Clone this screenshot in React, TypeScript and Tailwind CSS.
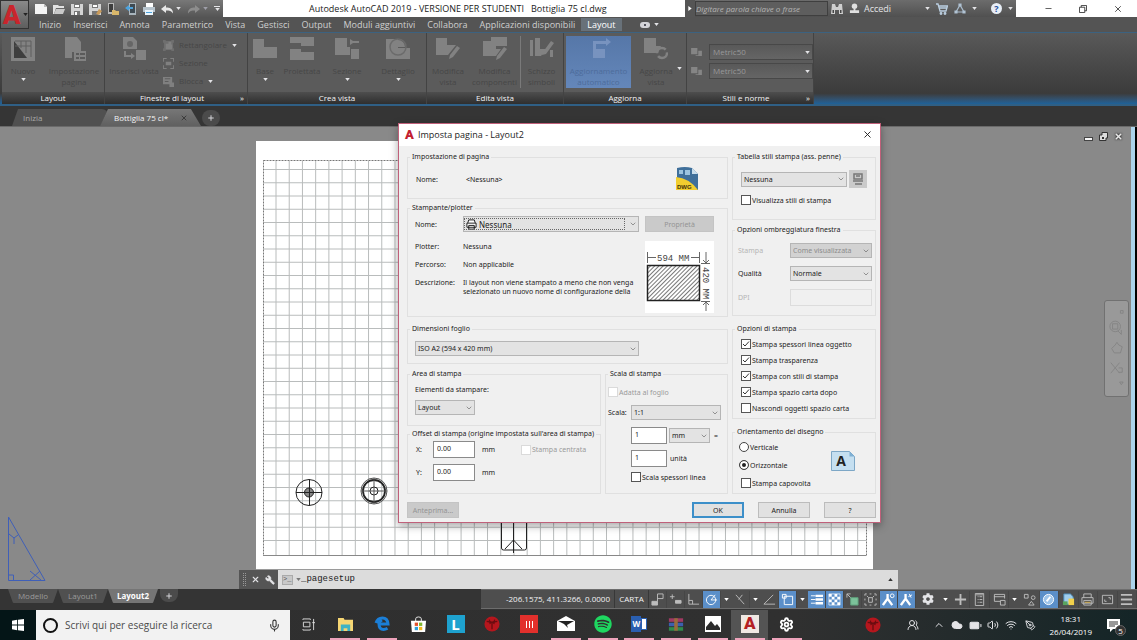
import type { ReactNode } from 'react';
import { clsx } from 'clsx';
import { FaCog, FaSpotify } from 'react-icons/fa';
import { Battery, ChevronDown, ChevronUp, Cloud, Mic, Minus, PenTool, Plus, Settings, UsersRound, Volume2, Wifi, Wrench, X } from 'lucide-react';

const MENU_TABS = ['Inizio', 'Inserisci', 'Annota', 'Parametrico', 'Vista', 'Gestisci', 'Output', 'Moduli aggiuntivi', 'Collabora', 'Applicazioni disponibili', 'Layout'];

const PRINT_OPTIONS = [
  { label: 'Stampa spessori linea oggetto', checked: true },
  { label: 'Stampa trasparenza', checked: true },
  { label: 'Stampa con stili di stampa', checked: true },
  { label: 'Stampa spazio carta dopo', checked: true },
  { label: 'Nascondi oggetti spazio carta', checked: false },
];

function Caret({ className = 'text-zinc-200' }: { className?: string }) {
  return (
    <svg viewBox="0 0 6 4" className={clsx('h-[3px] w-[5px] shrink-0', className)} fill="currentColor">
      <path d="M0 0h6L3 4z" />
    </svg>
  );
}

/* ---------- Title bar ---------- */

function QuickButton({ label, children }: { label: string; children: ReactNode }) {
  return (
    <button type="button" aria-label={label} className="flex h-[17px] w-[18px] items-center justify-center">
      <svg viewBox="0 0 14 12" className="h-3 w-[14px]">{children}</svg>
    </button>
  );
}

function QuickAccess() {
  return (
    <div className="flex items-center">
      <QuickButton label="Nuovo"><path d="M1 1h9l3 3v7H1z" fill="#f4f4f4" /><path d="M10 1v3h3z" fill="#bbb" /></QuickButton>
      <QuickButton label="Apri"><path d="M1 2h5l1 1h5v2H4l-2 6H1z" fill="#e2e2e2" /><path d="M4 6h9l-2 5H2z" fill="#c9c9c9" /></QuickButton>
      <QuickButton label="Salva"><path d="M1 1h12v11H1z" fill="#d4d4d4" /><path d="M4 1h6v4H4zM4 8h6v4H4z" fill="#777" /><path d="M5 2h4v2H5zM5 9h2v3H5z" fill="#fff" /></QuickButton>
      <QuickButton label="Salva con nome"><path d="M1 1h12v11H1z" fill="#d4d4d4" /><path d="M4 1h6v4H4zM4 8h6v4H4z" fill="#777" /><path d="M5 2h4v2H5z" fill="#fff" /><path d="M8 11l3-5 3 2-3 4z" fill="#c89a5a" /></QuickButton>
      <QuickButton label="Apri da Web"><path d="M2 0h6v11H2z" fill="#b8b8b8" /><path d="M3 1h4v8H3z" fill="#3d3d3d" /><path d="M6 7h3l1 1h3v4H6z" fill="#d9b76a" /></QuickButton>
      <QuickButton label="Salva in Web"><path d="M5 0h7v12H5z" fill="#a8b4bc" /><path d="M6 1h5v9H6z" fill="#3f4a52" /><path d="M1 5l4-3v2h4v2H5v2z" fill="#4da3dd" /></QuickButton>
      <QuickButton label="Stampa"><path d="M4 0h7v4H4z" fill="#fff" /><path d="M1 4h12v5H1z" fill="#b7c4cd" /><path d="M3 7h8v5H3z" fill="#e9f4fb" /><path d="M4 9h6v1H4z" fill="#4da3dd" /></QuickButton>
      <QuickButton label="Annulla"><path d="M1 6l5-4v2.500c4 0 7 1 7 6-1.500-2.500-3.500-3-7-3V10z" fill="#e8e8e8" /></QuickButton>
      <Caret />
      <span className="ml-1 flex"><QuickButton label="Ripeti"><path d="M13 6L8 2v2.500c-4 0-7 1-7 6 1.500-2.500 3.500-3 7-3V10z" fill="#8d8d8d" /></QuickButton></span>
      <Caret className="text-zinc-400" />
      <button type="button" aria-label="Personalizza" className="ml-[6px] flex flex-col items-center gap-px">
        <span className="h-px w-[6px] bg-zinc-200" />
        <Caret />
      </button>
    </div>
  );
}

function TitleBar() {
  return (
    <header className="flex h-[17px] shrink-0 bg-white">
      <div className="flex w-[223px] shrink-0 bg-linear-to-b from-[#787878] to-[#555] pl-8">
        <QuickAccess />
      </div>
      <h1 className="flex-1 overflow-hidden pl-[86px] font-['Open_Sans',sans-serif] text-[9px] leading-[17px] whitespace-pre text-[#222]">
        Autodesk AutoCAD 2019 - VERSIONE PER STUDENTI{'   '}Bottiglia 75 cl.dwg
      </h1>
      <div className="flex w-[331px] shrink-0 items-center bg-linear-to-b from-[#6c6c6c] to-[#505050]">
        <div className="flex h-full w-[10px] items-center justify-center bg-[#555]">
          <svg viewBox="0 0 4 6" className="h-[5px] w-1" fill="#fff"><path d="M0 0l4 3-4 3z" /></svg>
        </div>
        <input aria-label="Cerca" placeholder="Digitare parola chiave o frase" className="h-[15px] w-[133px] border border-[#3f3f3f] bg-[#5e5e5e] text-[8px] italic placeholder:text-[#b5b5b5]" />
        <button type="button" aria-label="Trova" className="ml-[3px] w-3">
          <svg viewBox="0 0 12 12" className="h-3 w-3" fill="#cfcfcf"><path d="M1 1h3l1 3h2l1-3h3l1 10H8V7H4v4H0z" /><path d="M1.500 7h1.500v3H1.500zM9 7h1.500v3H9z" fill="#444" /></svg>
        </button>
        <button type="button" className="ml-[6px] flex items-center gap-1 text-[9px] leading-[17px] text-zinc-200">
          <svg viewBox="0 0 12 12" className="h-[11px] w-[11px]" fill="#e0e0e0"><circle cx="6" cy="3.500" r="3" /><path d="M5 6h2v2h4v3H1V8h4z" /></svg>
          Accedi
        </button>
        <span className="ml-auto flex items-center gap-[6px] pr-[3px]">
          <Caret />
          <svg viewBox="0 0 12 12" className="h-3 w-3" fill="none" stroke="#bcd0e2" strokeWidth="1.300"><path d="M0 1h2l2 7h6l1.500-5H3M3.500 5h7" /><circle cx="5" cy="10.500" r=".8" /><circle cx="9" cy="10.500" r=".8" /></svg>
          <svg viewBox="0 0 12 12" className="h-3 w-3" fill="none" stroke="#a9bccd" strokeWidth="1.200"><path d="M6 2L2 9h8z" /><path d="M5 1h2v2H5zM1 8h2v2H1zM9 8h2v2H9z" fill="#d5e0ea" /></svg>
          <Caret />
          <span className="ml-2 flex h-[11px] w-[11px] items-center justify-center rounded-full bg-[#e8eef6] text-[9px] font-bold text-[#1f4f9c]">?</span>
          <Caret />
        </span>
      </div>
      <div className="flex w-[121px] shrink-0 items-center justify-between pr-[14px] pl-[28px] text-[#333]">
        <button type="button" aria-label="Riduci a icona"><Minus size={9} strokeWidth={2} /></button>
        <button type="button" aria-label="Ripristina">
          <svg viewBox="0 0 9 9" className="h-2 w-2" fill="none" stroke="currentColor"><path d="M.5 2.500h6v6h-6zM2.500 2.500v-2h6v6h-2" /></svg>
        </button>
        <button type="button" aria-label="Chiudi"><X size={10} strokeWidth={2} /></button>
      </div>
    </header>
  );
}

function MenuTabs() {
  return (
    <nav className="flex h-[15px] shrink-0 items-center bg-[#545454] pl-[33px] text-[9px] text-[#cfcfcf]">
      {MENU_TABS.map((tab) => (
        <button
          key={tab}
          type="button"
          className={clsx('h-[13px] px-[6px] leading-[13px] whitespace-nowrap', tab === 'Layout' && 'bg-[#687179] text-white')}
        >
          {tab}
        </button>
      ))}
      <span className="ml-[18px] flex h-[6px] w-[10px] items-center justify-center rounded-sm bg-zinc-300"><span className="h-[2px] w-[2px] bg-zinc-600" /></span>
      <span className="ml-1"><Caret /></span>
    </nav>
  );
}

/* ---------- Ribbon ---------- */

function Panel({ title, width, more, children }: { title: string; width: string; more?: boolean; children: ReactNode }) {
  return (
    <section className={clsx('flex shrink-0 flex-col border-r border-[#434343] bg-[#5b5b5b]', width)}>
      <div className="flex flex-1 pt-[3px]">{children}</div>
      <h2 className={clsx('relative h-3 bg-linear-to-b from-[#4e4e4e] to-[#2f2f2f] text-center text-[8px] leading-[11px] text-zinc-100', more && 'pr-2')}>
        {title}
        {more && <span className="absolute right-[3px]">»</span>}
      </h2>
    </section>
  );
}

function RibbonButton({ lines, width, caret, active, children }: { lines: string[]; width: string; caret?: boolean; active?: boolean; children: ReactNode }) {
  return (
    <button
      type="button"
      className={clsx('flex h-[52px] shrink-0 flex-col items-center text-[8px] leading-[11px]', width, active ? 'bg-linear-to-b from-[#5677a8] to-[#6487ba] text-[#4d6c9b]' : 'text-[#474747]')}
    >
      <svg viewBox="0 0 24 24" className={clsx('mt-px mb-[4px] h-6 w-6 shrink-0', active ? 'text-[#7893bf]' : 'text-[#828282]')} fill="currentColor">{children}</svg>
      {lines.map((line) => <span key={line} className="whitespace-nowrap">{line}</span>)}
      {caret && <span className="mt-[2px]"><Caret /></span>}
    </button>
  );
}

function SmallTool({ label, caret, children }: { label: string; caret?: boolean; children: ReactNode }) {
  return (
    <button type="button" className="flex h-[18px] items-center gap-[5px] text-[8px] text-[#474747]">
      <svg viewBox="0 0 12 12" className="h-[11px] w-[11px] text-[#808080]" fill="currentColor">{children}</svg>
      {label}
      {caret && <Caret />}
    </button>
  );
}

function StyleSelect({ label }: { label: string }) {
  return (
    <label className="flex items-center gap-[7px]">
      <svg viewBox="0 0 12 10" className="h-[9px] w-[11px]" fill="#858585"><path d="M0 0h7v7H0zM8 3h4v6H5V8h3z" /></svg>
      <span className="relative flex flex-1 items-center">
        <select aria-label={label} className="h-4 w-full appearance-none border border-[#484848] bg-linear-to-b from-[#595959] to-[#656565] pl-[3px] text-[8px] text-[#999]">
          <option>Metric50</option>
        </select>
        <span className="pointer-events-none absolute right-[3px]"><Caret /></span>
      </span>
    </label>
  );
}

function Ribbon() {
  return (
    <div className="flex h-[74px] shrink-0 border-t border-b-2 border-t-[#3c6280] border-b-[#2f5f85] bg-linear-to-b from-[#595959] via-[#3b3b3b] via-85% to-[#1d6299] pl-[2px]">
      <Panel title="Layout" width="w-[103px]">
        <RibbonButton lines={['Nuovo']} width="w-[42px]" caret>
          <path d="M0 0h24v24H0z" /><path d="M3 4v17h13z" fill="#3e3e3e" /><path d="M4 4h16v16M10 4v7M15 4v12M4 9h16" fill="none" stroke="#5e5e5e" />
        </RibbonButton>
        <RibbonButton lines={['Impostazione', 'pagina']} width="w-[60px]">
          <path d="M3 0h12l4 5v10h-9v6H3z" /><path d="M12 14h12v10H12z" /><path d="M14 17h3M18 17h5M14 21h3M18 21h5" stroke="#4d4d4d" strokeWidth="1.500" />
        </RibbonButton>
      </Panel>
      <Panel title="Finestre di layout" width="w-[143px]" more>
        <RibbonButton lines={['Inserisci vista']} width="w-[58px]">
          <path d="M1 0h10l4 4v8H1z" /><path d="M14 13h10v10H14zM4 14v4h5v-2l4 3-4 3v-2H2v-6z" /><circle cx="8" cy="7" r="3" fill="#666" />
        </RibbonButton>
        <div className="flex flex-col items-start">
          <SmallTool label="Rettangolare" caret><path d="M0 0h3v1h6V0h3v3h-1v6h1v3H9v-1H3v1H0V9h1V3H0z" fill="#6e6e6e" /><path d="M3 4h3V2h3v3h1v5H3z" /></SmallTool>
          <SmallTool label="Sezione"><path d="M0 0h4v1H1v3H0zM8 0h4v4h-1V1H8zM0 8h1v3h3v1H0zM11 8h1v4H8v-1h3zM3 4h6v4H3z" /></SmallTool>
          <SmallTool label="Blocca" caret><path d="M0 1h10v8H0zM7 7h5v5H7z" /><path d="M2 3h6M2 6h4" stroke="#5a5a5a" /></SmallTool>
        </div>
      </Panel>
      <Panel title="Crea vista" width="w-[179px]">
        <RibbonButton lines={['Base']} width="w-[34px]" caret><path d="M0 2h11v8h13v11H0z" /></RibbonButton>
        <RibbonButton lines={['Proiettata']} width="w-[40px]"><path d="M0 0h24v9H11V6H0zM0 12h11v3h13v8H0z" /></RibbonButton>
        <RibbonButton lines={['Sezione']} width="w-[50px]" caret><path d="M0 1h12v9h3v8H0zM16 12h8v10h-8zM15 2l3 2h6v2h-6l-3 2z" /></RibbonButton>
        <RibbonButton lines={['Dettaglio']} width="w-[52px]" caret><path d="M0 2h12v9h12v11H0z" /><circle cx="12" cy="10" r="8" fill="none" stroke="#6b6b6b" strokeWidth="1.500" /><path d="M12 3a7 7 0 017 7h-7z" /></RibbonButton>
      </Panel>
      <Panel title="Edita vista" width="w-[137px]">
        <RibbonButton lines={['Modifica', 'vista']} width="w-[42px]"><path d="M0 1h11v7h9l-8 10H0z" /><path d="M14 18l7-9 3 2-7 9-4 2z" /></RibbonButton>
        <RibbonButton lines={['Modifica', 'componenti']} width="w-[51px]"><path d="M8 0h16v9H13v3h5l-5 7H0V4h8z" /><path d="M14 19l7-9 3 2-7 9-4 2z" /></RibbonButton>
        <span className="h-[52px] w-px bg-[#7a7a7a]" />
        <RibbonButton lines={['Schizzo', 'simboli']} width="w-[41px]"><path d="M0 3h3v16H0zM5 1h5v11h6l-5 7H5zM13 15l8-11 3 2-8 11-4 1zM20 13h3v7h-3z" /></RibbonButton>
      </Panel>
      <Panel title="Aggiorna" width="w-[123px]">
        <span className="w-[2px] shrink-0" />
        <RibbonButton lines={['Aggiornamento', 'automatico']} width="w-[65px]" active><path d="M6 4h13V1l5 4-5 4V7H9v5h9v9H6z" /></RibbonButton>
        <RibbonButton lines={['Aggiorna', 'vista']} width="w-[50px]"><path d="M0 1h12v8h5l-3 7H0z" /><circle cx="18" cy="16" r="5" fill="none" stroke="currentColor" strokeWidth="2.500" strokeDasharray="12 3" /></RibbonButton>
        <span className="-ml-1 self-center pt-2"><Caret /></span>
      </Panel>
      <Panel title="Stili e norme" width="w-[127px]" more>
        <div className="flex flex-1 flex-col gap-[3px] pt-2 pl-1">
          <StyleSelect label="Stile sezione" />
          <StyleSelect label="Stile dettaglio" />
        </div>
      </Panel>
    </div>
  );
}

function FileTabs() {
  return (
    <div className="flex h-5 shrink-0 items-end bg-[#353535] pl-3 text-[8px] leading-4">
      <button type="button" className="h-[17px] w-[96px] rounded-t-md bg-[#505050] pl-[11px] text-left text-[#a8a8a8] [clip-path:polygon(6px_0,100%_0,92%_100%,0_100%)]">Inizia</button>
      <div className="-ml-2 flex h-[17px] w-[101px] items-center rounded-t-md bg-linear-to-b from-[#777] to-[#606060] pl-[14px] text-zinc-100 [clip-path:polygon(8px_0,90%_0,100%_100%,0_100%)]">
        <button type="button" className="whitespace-nowrap">Bottiglia 75 cl*</button>
        <button type="button" aria-label="Chiudi scheda" className="ml-3 text-[#3c3c3c]"><X size={8} strokeWidth={3} /></button>
      </div>
      <button type="button" aria-label="Nuovo disegno" className="ml-px flex h-4 w-[18px] items-center justify-center rounded-lg bg-[#4b4b4b] text-zinc-300"><Plus size={8} strokeWidth={3} /></button>
    </div>
  );
}

/* ---------- Drawing area ---------- */

const gridX = Array.from({ length: 45 }, (_, i) => 276 + i * 13.22);
const gridY = Array.from({ length: 29 }, (_, i) => 42.5 + i * 13.25);

function Drawing() {
  return (
    <svg width="1131" height="463" viewBox="0 0 1131 463" className="absolute top-0 left-0" fill="none">
      <path d="M256 14h617v430H256z" fill="#fff" />
      <path d="M256 442.500h617" stroke="#9a9a9a" />
      <g stroke="#b9bcbc">
        {gridX.map((x) => <path key={x} d={`M${x} 34V428`} />)}
        {gridY.map((y) => <path key={y} d={`M263 ${y}H866`} />)}
      </g>
      <path d="M263.500 33.500h603v395h-603z" stroke="#777" strokeDasharray="2 1" />
      <path d="M263 428.500h603" stroke="#888" />
      <g stroke="#222">
        <circle cx="309" cy="365.500" r="13" />
        <circle cx="309" cy="365.500" r="4.500" fill="#888" />
        <path d="M296 365.500h26M309.500 352.500v26" />
        <circle cx="374" cy="364" r="13" strokeWidth="1" stroke="#555" />
        <circle cx="374" cy="364" r="11" strokeWidth="1.800" />
        <circle cx="374" cy="364" r="4" />
        <path d="M361 364h26M374 351v26" stroke="#555" />
        <path d="M501.500 389v32q0 2 2 2h21q2 0 2-2v-32" />
        <path d="M513.500 389v37M505 422l8.500-9 8.500 9" />
      </g>
      {/* UCS triangle */}
      <g stroke="#3f5fb8">
        <path d="M8.500 390v63.500H45zM8.500 448h5v5M9 407l5 4 4-3M14 411v6M30 444l11 9M30 453l10-9" />
      </g>
    </svg>
  );
}

function Canvas() {
  return (
    <main className="relative flex-1 overflow-hidden border-t border-[#6a6a6a] bg-[#898989]">
      <Drawing />
      <div className="absolute top-[5px] right-[14px] flex items-center gap-[6px] text-[#e8e8e8]">
        <button type="button" aria-label="Riduci disegno" className="mt-1 h-1 w-[9px] border border-[#444] bg-zinc-100" />
        <button type="button" aria-label="Ripristina disegno">
          <svg viewBox="0 0 9 9" className="h-[9px] w-[9px]"><path d="M3 .5h5.500V6H7v2.500H.5V3H3z" fill="#ddd" stroke="#333" /><path d="M3 5h2v2H3z" fill="#333" /></svg>
        </button>
        <button type="button" aria-label="Chiudi disegno"><X size={9} strokeWidth={4} className="drop-shadow-[0_0_1px_#000]" /></button>
      </div>
      <div className="absolute top-[173px] right-[8px] h-[97px] w-[25px] rounded-[3px] border border-[#717171] bg-[#999] p-1">
        <svg viewBox="0 0 17 88" className="h-full w-full" fill="none" stroke="#838383">
          <path d="M13 1h3v3h-3zM12 82h4l-2 3z" /><circle cx="7" cy="19" r="6" /><path d="M4 16h6v6H4zM10 24l4 4v-5" />
          <path d="M3 44l4-4 2-3 2 3 4 2-2 7H6zM2 60l10 12M12 60L2 72M11 66h4v5h-4" />
        </svg>
      </div>
      <div className="absolute top-0 right-0 bottom-0 w-[6px] border-r-2 border-black bg-[#abd3ec]" />

      {/* Command line */}
      <div className="absolute bottom-0 left-[239px] flex h-[19px] w-[659px] bg-[#dcdcdc]">
        <div className="flex w-[39px] items-center gap-[5px] bg-[#555] pl-1 text-zinc-200">
          <span className="h-[13px] w-[3px] border-x border-dotted border-[#999]" />
          <button type="button" aria-label="Chiudi riga di comando"><X size={9} strokeWidth={3} /></button>
          <button type="button" aria-label="Personalizza riga di comando"><Wrench size={10} fill="currentColor" className="-scale-x-100" /></button>
        </div>
        <span className="flex items-center gap-[3px] pl-1 text-[#888]">
          <span className="flex h-[10px] w-[11px] items-center border border-[#aaa] bg-[#c8c8c8] font-['Liberation_Mono',monospace] text-[7px] text-[#555]">&gt;_</span>
          <Caret className="text-[#777]" />
        </span>
        <input aria-label="Riga di comando" defaultValue="_pagesetup" className="min-w-0 flex-1 font-['Liberation_Mono',monospace] text-[9px] text-[#222]" />
        <button type="button" aria-label="Cronologia comandi" className="w-[10px]"><span className="block w-[5px] rotate-180"><Caret className="block text-[#333]" /></span></button>
      </div>
    </main>
  );
}

/* ---------- Page setup dialog ---------- */

function Group({ title, className, children }: { title: string; className?: string; children: ReactNode }) {
  return (
    <fieldset className={clsx('min-w-0 border border-[#e0e0e0]', className)}>
      <legend className="ml-[2px] h-[10px] px-[2px] leading-[10px] whitespace-nowrap">{title}</legend>
      {children}
    </fieldset>
  );
}

function Select({ label, value, className, disabled }: { label: string; value: string; className?: string; disabled?: boolean }) {
  return (
    <span className={clsx('relative flex h-[15px] items-center', className)}>
      <select
        aria-label={label}
        disabled={disabled}
        className="h-full w-full appearance-none border border-[#b5b5b5] bg-[#e3e3e3] pl-[2px] text-[#1c1c1c] disabled:bg-[#d2d2d2] disabled:text-[#8c8c8c] disabled:opacity-100"
      >
        <option>{value}</option>
      </select>
      <ChevronDown size={8} className="pointer-events-none absolute right-[2px] text-[#666]" />
    </span>
  );
}

function Check({ label, checked, disabled }: { label: string; checked?: boolean; disabled?: boolean }) {
  return (
    <label className={clsx('flex items-center gap-px whitespace-nowrap', disabled && 'text-[#9a9a9a]')}>
      <span className="relative flex h-[10px] w-[10px] shrink-0">
        <input type="checkbox" defaultChecked={checked} disabled={disabled} className="peer h-[10px] w-[10px] appearance-none border border-[#555] bg-white disabled:border-[#dadada]" />
        <svg viewBox="0 0 10 10" className="pointer-events-none absolute hidden h-[10px] w-[10px] peer-checked:block" fill="none" stroke="#333">
          <path d="M2 5l2 2 4-4.500" />
        </svg>
      </span>
      {label}
    </label>
  );
}

function Radio({ label, checked }: { label: string; checked?: boolean }) {
  return (
    <label className="flex h-[18px] items-center gap-px">
      <input type="radio" name="orientamento" defaultChecked={checked} className="h-[10px] w-[10px] shrink-0 appearance-none rounded-full border border-[#444] bg-white checked:bg-[#222] checked:ring-2 checked:ring-white checked:ring-inset" />
      {label}
    </label>
  );
}

function NumberBox({ label, value, className }: { label: string; value: string; className: string }) {
  return <input aria-label={label} defaultValue={value} className={clsx('h-[17px] border border-[#8a8a8a] bg-white px-[3px] pb-[3px]', className)} />;
}

function DialogButton({ label, className, disabled }: { label: string; className?: string; disabled?: boolean }) {
  return (
    <button
      type="button"
      disabled={disabled}
      className={clsx('h-4 w-[52px] border', disabled ? 'border-[#c4c4c4] bg-[#cacaca] text-[#949494]' : 'bg-[#e1e1e1]', className)}
    >
      {label}
    </button>
  );
}

function PaperPreview() {
  return (
    <svg viewBox="0 0 69 72" className="mt-[9px] h-[72px] w-[69px] bg-white" fill="none" stroke="#666">
      <defs>
        <pattern id="hatch" width="3" height="3" patternUnits="userSpaceOnUse" patternTransform="rotate(45)">
          <path d="M.5 0v3" stroke="#555" strokeWidth=".8" />
        </pattern>
      </defs>
      <path d="M2.500 24.500h52v35h-52z" fill="url(#hatch)" stroke="#222" strokeWidth="1.500" />
      <path d="M2.500 11v11M54.500 11v11M3 16.500h8M46 16.500h8M56 22.500h9M56 60.500h9M61 11v11M58 19l3 3 3-3M61 61v9M58 64l3-3 3 3" />
      <text x="12" y="20" fontSize="9" fontFamily="Liberation Mono" fill="#444" stroke="none">594 MM</text>
      <text x="-5" y="0" transform="translate(58 31) rotate(90)" fontSize="9" fontFamily="Liberation Mono" fill="#444" stroke="none">420 MM</text>
    </svg>
  );
}

function PageSetupDialog() {
  return (
    <div role="dialog" aria-label="Imposta pagina" className="absolute top-[123px] left-[398px] w-[483px] border border-[#c0607a] bg-[#f0f0f0] font-['Noto_Sans','Open_Sans',sans-serif] text-[7px] leading-[9px] text-[#1c1c1c] shadow-[0_3px_8px_rgba(0,0,0,0.35)]">
      <div className="flex h-[22px] items-center bg-white pr-[7px] pb-[2px] pl-[6px] font-['Open_Sans',sans-serif] text-[9px]">
        <span className="w-3 font-['Roboto',sans-serif] text-[13px] font-black text-[#c3202f]">A</span>
        <span className="pl-px">Imposta pagina - Layout2</span>
        <button type="button" aria-label="Chiudi" className="ml-auto"><X size={11} strokeWidth={2} /></button>
      </div>

      <div className="flex gap-1 pt-[6px] pr-1 pl-2">
        <div className="w-[321px] shrink-0">
          <Group title="Impostazione di pagina" className="h-[47px]">
            <div className="flex items-center pt-[5px] pl-2">
              <span className="w-[50px]">Nome:</span>
              <span>&lt;Nessuna&gt;</span>
              <svg viewBox="0 0 24 24" className="mr-7 ml-auto h-6 w-6">
                <path d="M2 1q8-2 15 0l6 6v16H2z" fill="#3f6f9a" />
                <path d="M17 1l6 6h-6z" fill="#c8ddec" />
                <path d="M4 3h4v4H4zM10 3h5v5h-5z" fill="#9cc3df" />
                <path d="M1 10q13 1 22 13H1z" fill="#f2ce2f" />
                <text x="2" y="22" fontSize="6" fontWeight="bold" fontFamily="Liberation Sans" fill="#43340c">DWG</text>
              </svg>
            </div>
          </Group>

          <Group title="Stampante/plotter" className="mt-1 h-[114px]">
            <div className="flex gap-[6px] pt-[3px] pl-[7px]">
              <div className="w-[224px]">
                <label className="flex items-center">
                  <span className="w-12">Nome:</span>
                  <span className="relative flex flex-1 items-center">
                    <select aria-label="Nome plotter" className="h-4 w-full appearance-none border border-[#b5b5b5] bg-[#e3e3e3] pl-[15px] text-[8px]">
                      <option>Nessuna</option>
                    </select>
                    <svg viewBox="0 0 12 12" className="pointer-events-none absolute left-[3px] h-[11px] w-[11px]" fill="#fff" stroke="#111"><path d="M3 1h6l1 3 1 1v4H1V5l1-1zM1 4.500h10M3 7h6v4H3z" /></svg>
                    <span className="pointer-events-none absolute inset-y-[2px] right-[14px] left-px border border-dotted border-[#666]" />
                    <ChevronDown size={8} className="pointer-events-none absolute right-[2px] text-[#666]" />
                  </span>
                </label>
                <dl className="grid grid-cols-[48px_1fr] gap-y-[9px] pt-[10px]">
                  <dt>Plotter:</dt>
                  <dd>Nessuna</dd>
                  <dt>Percorso:</dt>
                  <dd>Non applicabile</dd>
                  <dt>Descrizione:</dt>
                  <dd className="whitespace-nowrap">Il layout non viene stampato a meno che non venga<br />selezionato un nuovo nome di configurazione della</dd>
                </dl>
              </div>
              <div className="w-[69px]">
                <DialogButton label="Proprietà" disabled className="w-full" />
                <PaperPreview />
              </div>
            </div>
          </Group>

          <Group title="Dimensioni foglio" className="mt-[7px] h-10">
            <div className="pt-[7px] pl-[7px]"><Select label="Dimensioni foglio" value="ISO A2 (594 x 420 mm)" className="w-[224px]" /></div>
          </Group>

          <div className="mt-[5px] flex gap-1">
            <div className="w-[194px] shrink-0">
              <Group title="Area di stampa" className="h-[57px]">
                <div className="pt-[6px] pl-[7px]">
                  <p>Elementi da stampare:</p>
                  <Select label="Elementi da stampare" value="Layout" className="mt-[6px] w-[60px]" />
                </div>
              </Group>
              <Group title="Offset di stampa (origine impostata sull'area di stampa)" className="mt-[3px] h-[65px]">
                <div className="flex flex-col gap-[6px] pt-[2px] pl-2">
                  <div className="flex items-center">
                    <span className="w-[17px]">X:</span>
                    <NumberBox label="Offset X" value="0.00" className="w-[42px]" />
                    <span className="w-[46px] pl-[7px]">mm</span>
                    <Check label="Stampa centrata" disabled />
                  </div>
                  <div className="flex items-center">
                    <span className="w-[17px]">Y:</span>
                    <NumberBox label="Offset Y" value="0.00" className="w-[42px]" />
                    <span className="pl-[7px]">mm</span>
                  </div>
                </div>
              </Group>
            </div>
            <Group title="Scala di stampa" className="h-[125px] flex-1">
              <div className="flex flex-col pt-2 pl-[2px]">
                <Check label="Adatta al foglio" disabled />
                <div className="mt-2 flex items-center">
                  <span className="w-[23px]">Scala:</span>
                  <Select label="Scala" value="1:1" className="w-[90px]" />
                </div>
                <div className="mt-[7px] flex items-center gap-[2px] pl-[23px]">
                  <NumberBox label="Unità carta" value="1" className="w-9" />
                  <Select label="Unità di misura" value="mm" className="w-[41px]" />
                  <span className="pl-[2px]">=</span>
                </div>
                <div className="mt-[6px] flex items-center gap-[3px] pl-[23px]">
                  <NumberBox label="Unità disegno" value="1" className="w-9" />
                  <span>unità</span>
                </div>
                <div className="mt-[5px] pl-[23px]"><Check label="Scala spessori linea" /></div>
              </div>
            </Group>
          </div>
        </div>

        <div className="min-w-0 flex-1">
          <Group title="Tabella stili stampa (ass. penne)" className="h-[68px]">
            <div className="pt-2 pl-2">
              <div className="flex items-center gap-[2px]">
                <Select label="Tabella stili" value="Nessuna" className="w-[106px]" />
                <button type="button" aria-label="Modifica stile" className="flex h-[18px] w-[18px] items-center justify-center bg-[#cacaca]">
                  <svg viewBox="0 0 12 12" className="h-3 w-3" fill="none" stroke="#777" strokeWidth="1.500"><path d="M2 1h8v5H2zM4 3h4M1 8h10M3 11h7" /></svg>
                </button>
              </div>
              <div className="mt-[7px]"><Check label="Visualizza stili di stampa" /></div>
            </div>
          </Group>

          <Group title="Opzioni ombreggiatura finestra" className="mt-[5px] h-[91px]">
            <div className="flex flex-col gap-2 pt-2 pr-[3px] pl-[5px]">
              <label className="flex items-center justify-between text-[#b5b5b5]">Stampa<Select label="Stampa" value="Come visualizzata" className="w-[82px]" disabled /></label>
              <label className="flex items-center justify-between">Qualità<Select label="Qualità" value="Normale" className="w-[82px]" /></label>
              <label className="flex items-center justify-between text-[#b5b5b5]">DPI<input disabled className="h-[17px] w-[82px] border border-[#dcdcdc]" /></label>
            </div>
          </Group>

          <Group title="Opzioni di stampa" className="mt-2 h-[95px]">
            <div className="flex flex-col gap-[6px] pt-[5px] pl-2">
              {PRINT_OPTIONS.map((opt) => <Check key={opt.label} {...opt} />)}
            </div>
          </Group>

          <Group title="Orientamento del disegno" className="mt-2 h-[67px]">
            <div className="flex items-center justify-between pt-px pr-5 pl-[6px]">
              <div>
                <Radio label="Verticale" />
                <Radio label="Orizzontale" checked />
                <div className="flex h-[18px] items-center pl-[2px]"><Check label="Stampa capovolta" /></div>
              </div>
              <svg viewBox="0 0 24 20" className="mb-2 h-5 w-6">
                <path d="M.5.500h18l5 5v14H.5z" fill="#c5dff0" stroke="#7da7c6" />
                <path d="M18.500.500v5h5z" fill="#7fb0d4" />
                <text x="10" y="15" textAnchor="middle" fontSize="14" fontWeight="bold" fontFamily="Open Sans" fill="#222">A</text>
              </svg>
            </div>
          </Group>
        </div>
      </div>

      <div className="flex gap-[14px] pt-2 pr-1 pb-1 pl-2">
        <DialogButton label="Anteprima..." disabled className="mr-auto" />
        <DialogButton label="OK" className="border-2 border-[#3c8fc9]" />
        <DialogButton label="Annulla" className="border-[#bcbcbc]" />
        <DialogButton label="?" className="border-[#bcbcbc]" />
      </div>
    </div>
  );
}

/* ---------- Status bar ---------- */

function StatusButton({ label, on, wide, children }: { label: string; on?: boolean; wide?: boolean; children: ReactNode }) {
  return (
    <button type="button" aria-label={label} className={clsx('flex h-[17px] items-center justify-center border-r border-[#464646]', wide ? 'min-w-0 flex-1' : 'w-[18px] shrink-0', on ? 'bg-[#5b8fc9] text-white' : 'text-[#bdbdbd]')}>
      <svg viewBox="0 0 14 14" className="h-[13px] w-[13px] shrink-0" fill="none" stroke="currentColor">{children}</svg>
    </button>
  );
}

function StatusCaret() {
  return <button type="button" aria-label="Altre opzioni" className="flex w-[11px] shrink-0 justify-center"><Caret className="text-white" /></button>;
}

function StatusBar() {
  return (
    <div className="flex h-[21px] shrink-0 bg-[#343434] text-[8px]">
      <div className="flex items-start pl-2 leading-[14px] text-[#9b9b9b]">
        <button type="button" className="h-[14px] w-[50px] rounded-b-md bg-[#505050] [clip-path:polygon(0_0,100%_0,90%_100%,10%_100%)]">Modello</button>
        <button type="button" className="h-[14px] w-[50px] rounded-b-md bg-[#505050] [clip-path:polygon(0_0,100%_0,90%_100%,10%_100%)]">Layout1</button>
        <button type="button" className="h-[14px] w-[50px] rounded-b-md bg-[#757575] font-bold text-white [clip-path:polygon(0_0,100%_0,90%_100%,10%_100%)]">Layout2</button>
        <button type="button" aria-label="Nuovo layout" className="ml-[2px] flex h-[13px] w-[18px] items-center justify-center rounded-b-lg bg-[#4b4b4b] text-zinc-300"><Plus size={8} strokeWidth={3} /></button>
      </div>
      <div className="ml-auto flex h-5 w-[656px] shrink-0 items-center border-t border-b border-t-[#6d6d6d] border-b-[#6d6d6d] bg-[#4e4e4e] text-zinc-100">
        <span className="w-[134px] shrink-0 border-r border-[#383838] pr-1 text-right leading-[18px] whitespace-nowrap">-206.1575, 411.3266, 0.0000</span>
        <button type="button" className="w-[34px] shrink-0 border-r border-[#383838] leading-[18px]">CARTA</button>
        <StatusButton label="Vincoli"><path d="M7 9V1h6v5H7" /><path d="M1 9h6v4H1z" fill="currentColor" /></StatusButton>
        <StatusButton label="Input dinamico"><path d="M1 4h5M3.500 1.500v5" /><path d="M7 8h6v3H7z" fill="currentColor" /></StatusButton>
        <StatusButton label="Orto"><path d="M2 1v11h11M2 8h4v4" /></StatusButton>
        <StatusButton label="Puntamento polare" on><circle cx="6.500" cy="7.500" r="5" /><path d="M6.500 7.500H13M6.500 7.500L11 2" /></StatusButton>
        <StatusCaret />
        <StatusButton label="Assonometria"><path d="M2 2l9 10M9 2L5 7" /></StatusButton>
        <StatusCaret />
        <StatusButton label="Puntamento snap"><path d="M13 12H1L11 2" /></StatusButton>
        <StatusButton label="Snap ad oggetto" on><path d="M3.500 3.500h9v9h-9z" /><path d="M1.500 1.500h4v4h-4z" /></StatusButton>
        <StatusCaret />
        <StatusButton label="Spessore linea" on><path d="M1 3h5M1 7h5M1 11h5" /><path d="M6 3h8M6 7h8M6 11h8" strokeWidth="2.500" /></StatusButton>
        <StatusButton label="Trasparenza" on>
          <path d="M1 1h3v3H1zM7 1h3v3H7zM4 4h3v3H4zM10 4h3v3h-3zM1 7h3v3H1zM7 7h3v3H7zM4 10h3v3H4zM10 10h3v3h-3z" fill="currentColor" stroke="none" />
          <path d="M1 1h12v12H1z" strokeWidth=".7" />
        </StatusButton>
        <StatusButton label="Ciclo di selezione"><path d="M1 1l5 5M1 1v4M1 1h4" /><path d="M5 5h8v8H5z" fill="#7cc29a" stroke="#5e9f7b" /></StatusButton>
        <StatusButton label="Filtro di selezione"><path d="M1 1h2M6 1h2M11 1h2v2M13 6v2M13 11v2h-2M8 13H6M3 13H1v-2M1 8V6M1 3V1M5 5h4v5H5zM3 3l2 2M11 3L9 5" /></StatusButton>
        <StatusButton label="Visibilità annotazioni" on><path d="M6 1v5l-5 7M6 6l5 7" strokeWidth="2.500" /><circle cx="11" cy="3" r="2" /></StatusButton>
        <StatusButton label="Scala automatica" on><path d="M6 1v5l-5 7M6 6l5 7" strokeWidth="2.500" /><path d="M9 4l4-2M10 1l2 4" /></StatusButton>
        <button type="button" aria-label="Area di lavoro" className="flex w-6 shrink-0 justify-center text-zinc-200"><FaCog size={12} /></button>
        <StatusCaret />
        <StatusButton wide label="Monitor annotazioni"><path d="M7 1v12M1 7h12" strokeWidth="2" /></StatusButton>
        <StatusButton wide label="Unità"><path d="M2.500.500h9v13h-9zM5 4h1M7 4h3M5 7h1M7 7h3M5 10h1M7 10h3M3 2h8" /></StatusButton>
        <StatusButton wide label="Proprietà rapide"><path d="M8 9H1.500V1.500h11V6M1 4h12M8 8h5v5H8z" /></StatusButton>
        <StatusCaret />
        <StatusButton wide label="Isola oggetti"><path d="M1.500 1.500h4v4h-4zM9 9l3 4H6z" /><circle cx="11" cy="5" r="2" /></StatusButton>
        <StatusButton wide label="Accelerazione hardware" on><circle cx="7" cy="7" r="5.500" fill="#9cc3ea" /><path d="M5 9l4-5" strokeWidth="2" /></StatusButton>
        <StatusButton wide label="Riferimenti"><path d="M2 1h7l3 3v8H2z" fill="#9fcdec" stroke="#4d8fbd" /><path d="M7 6h6v7H7z" fill="#f1d04b" stroke="none" /><path d="M1 9h5v4H1z" fill="#58a45f" stroke="none" /></StatusButton>
        <StatusButton wide label="Stampa"><path d="M3 5V1h8v4M1 5h12v6H1zM3 8h8v5H3z" /><path d="M4 10h6" stroke="#e4bc55" /></StatusButton>
        <StatusButton wide label="Schermo intero"><path d="M1.500 2.500h11v9h-11zM8 5h2v2M4 7v2h2" /></StatusButton>
        <StatusButton wide label="Personalizzazione"><path d="M1 2h12M1 7h12M1 12h12" strokeWidth="2" /></StatusButton>
      </div>
    </div>
  );
}

/* ---------- Windows taskbar ---------- */

function TaskItem({ label, open, active, children }: { label: string; open?: boolean; active?: boolean; children: ReactNode }) {
  return (
    <button type="button" aria-label={label} className={clsx('flex h-[30px] flex-1 flex-col items-center', active && 'bg-[#545454]')}>
      <span className="flex flex-1 items-center">{children}</span>
      <span className={clsx('h-[2px] w-[30px]', open && 'bg-[#eea3bb]')} />
    </button>
  );
}

function RedBall() {
  return (
    <svg viewBox="0 0 18 18" className="h-4 w-4">
      <circle cx="9" cy="9" r="8.500" fill="#b5161d" />
      <path d="M3 6l6 1 6-1M9 7v8M6 4l1 5M12 4l-1 5" fill="none" stroke="#6a0c10" strokeWidth="1.500" />
    </svg>
  );
}

function Taskbar() {
  return (
    <footer className="flex h-[30px] shrink-0 bg-linear-to-r from-[#2f2f2f] via-[#303030] via-70% to-[#142527]">
      <button type="button" aria-label="Start" className="flex w-9 shrink-0 items-center justify-center bg-[#041517]">
        <svg viewBox="0 0 14 14" className="h-3 w-3" fill="#fff"><path d="M0 2l6-1v5.500H0zM7 1l7-1v6.500H7zM0 7.500h6V13l-6-1zM7 7.500h7V14l-7-1z" /></svg>
      </button>
      <label className="flex w-[254px] shrink-0 items-center bg-[#f2f2f2] pr-[9px] pl-[7px]">
        <span className="h-[15px] w-[15px] shrink-0 rounded-full border-2 border-[#111]" />
        <input aria-label="Cerca in Windows" placeholder="Scrivi qui per eseguire la ricerca" className="ml-[7px] min-w-0 flex-1 text-[10px] placeholder:text-[#4a4a4a]" />
        <Mic size={13} className="text-[#333]" />
      </label>
      <div className="flex w-[515px] shrink-0">
        <TaskItem label="Visualizzazione attività">
          <svg viewBox="0 0 14 14" className="h-[13px] w-[13px]" fill="none" stroke="#ddd"><path d="M1.500 4.500h7v5h-7zM1 2V1h8v1M1 12v1h8v-1M12.500 1v12M11 5h3" /></svg>
        </TaskItem>
        <TaskItem label="Esplora file" open>
          <svg viewBox="0 0 18 16" className="h-[15px] w-[17px]"><path d="M1 1h6l1 2h9v12H1z" fill="#f6d673" /><path d="M4 8h10v7h-3v-3H7v3H4z" fill="#3fb3c4" /></svg>
        </TaskItem>
        <TaskItem label="Edge" open>
          <svg viewBox="0 0 16 16" className="h-4 w-4" fill="none"><path d="M2 7q1.500-5 6.500-5T14 8H5M5 8q0 5.500 4.500 5.500 2 0 4-1.200M5 8q-.5-2 3-4" stroke="#1b7fd8" strokeWidth="3" /></svg>
        </TaskItem>
        <TaskItem label="Store">
          <svg viewBox="0 0 18 18" className="h-[17px] w-[17px]"><path d="M6 6V3q0-2 3-2t3 2v3" fill="none" stroke="#eee" /><path d="M1 5h16l-1 12H2z" fill="#fff" /><path d="M5 7h3.500v3.500H5z" fill="#e2532d" /><path d="M9.500 7H13v3.500H9.500z" fill="#7fb62f" /><path d="M5 11.500h3.500V15H5z" fill="#2c9fdb" /><path d="M9.500 11.500H13V15H9.500z" fill="#f2b81e" /></svg>
        </TaskItem>
        <TaskItem label="Lexis"><span className="flex h-[18px] w-[18px] items-center justify-center bg-[#1ea2cf] text-[15px] font-bold text-white">L</span></TaskItem>
        <TaskItem label="Gioco"><RedBall /></TaskItem>
        <TaskItem label="Libreria"><span className="flex h-[18px] w-[18px] items-center justify-center gap-[2px] bg-[#e2302c]"><i className="h-[7px] w-px bg-white" /><i className="h-[7px] w-px bg-white" /><i className="h-[7px] w-px bg-white" /></span></TaskItem>
        <TaskItem label="Posta" open>
          <svg viewBox="0 0 18 16" className="h-4 w-[18px]"><path d="M0 5l9-5 9 5v10H0z" fill="#fff" /><path d="M1 5h16l-7 4 1 3-4-4z" fill="#222" /></svg>
        </TaskItem>
        <TaskItem label="Spotify" open><FaSpotify size={18} color="#1ed760" /></TaskItem>
        <TaskItem label="Word" open>
          <span className="flex items-center"><span className="flex h-4 w-[10px] items-center justify-center bg-[#2a5fb0] text-[8px] font-bold text-white">W</span><span className="h-3 w-[6px] border border-[#2a5fb0] bg-white" /></span>
        </TaskItem>
        <TaskItem label="WinRAR" open>
          <svg viewBox="0 0 18 14" className="h-[13px] w-4"><path d="M1 0h16v4H1z" fill="#a13a63" /><path d="M1 5h16v4H1z" fill="#3c5fae" /><path d="M1 10h16v4H1z" fill="#2f8b4c" /><path d="M7 0h4v14H7z" fill="#9a6b3c" /></svg>
        </TaskItem>
        <TaskItem label="Foto" open>
          <svg viewBox="0 0 16 16" className="h-4 w-4"><path d="M0 0h16v16H0z" fill="#fff" /><path d="M1 14V11l5-6 4 5 2-2 3 4v2z" fill="#2b2b2b" /></svg>
        </TaskItem>
        <TaskItem label="AutoCAD" open active><span className="flex h-[18px] w-[18px] items-center justify-center bg-[#f1e9e4] font-['Roboto',sans-serif] text-[17px] font-black text-[#b51f24]">A</span></TaskItem>
        <TaskItem label="Impostazioni" open><Settings size={15} strokeWidth={3} color="#fff" /></TaskItem>
      </div>
      <div className="ml-auto flex shrink-0 items-center text-zinc-200">
        <RedBall />
        <UsersRound size={12} className="ml-[26px]" />
        <ChevronUp size={12} className="ml-[14px]" />
        <Cloud size={12} fill="currentColor" className="ml-[6px]" />
        <Battery size={13} fill="currentColor" className="ml-[6px]" />
        <Volume2 size={12} className="ml-[5px]" />
        <Wifi size={12} className="ml-[6px]" />
        <PenTool size={11} className="ml-2" />
        <time className="ml-[14px] text-center text-[8px] leading-[13px] text-white">18:31<br />26/04/2019</time>
        <button type="button" aria-label="Notifiche" className="relative mr-[17px] ml-[15px]">
          <svg viewBox="0 0 13 13" className="h-[13px] w-[13px]"><path d="M0 0h13v10H6l-3 3v-3H0z" fill="#fff" /><path d="M2 3h9M2 5h9M2 7h6" stroke="#333" /></svg>
          <span className="absolute -right-[6px] -bottom-[4px] flex h-[11px] w-[11px] items-center justify-center rounded-full border border-[#666] bg-[#333] text-[8px] leading-[9px] text-white">5</span>
        </button>
      </div>
    </footer>
  );
}

export default function App() {
  return (
    <div className="relative flex h-screen flex-col overflow-hidden bg-[#353535] font-['Open_Sans','Noto_Sans',sans-serif]">
      <TitleBar />
      <MenuTabs />
      <Ribbon />
      <FileTabs />
      <Canvas />
      <StatusBar />
      <Taskbar />
      <button type="button" aria-label="Menu applicazione" className="absolute top-0 left-0 flex h-[29px] w-[29px] items-center gap-[2px] border border-[#333] bg-linear-to-b from-[#8a8a8a] to-[#5e5e5e] pl-px">
        <span className="w-[19px] font-['Roboto',sans-serif] text-[26px] leading-[26px] font-black text-[#c9252c]">A</span>
        <Caret className="text-[#222]" />
      </button>
      <PageSetupDialog />
    </div>
  );
}
